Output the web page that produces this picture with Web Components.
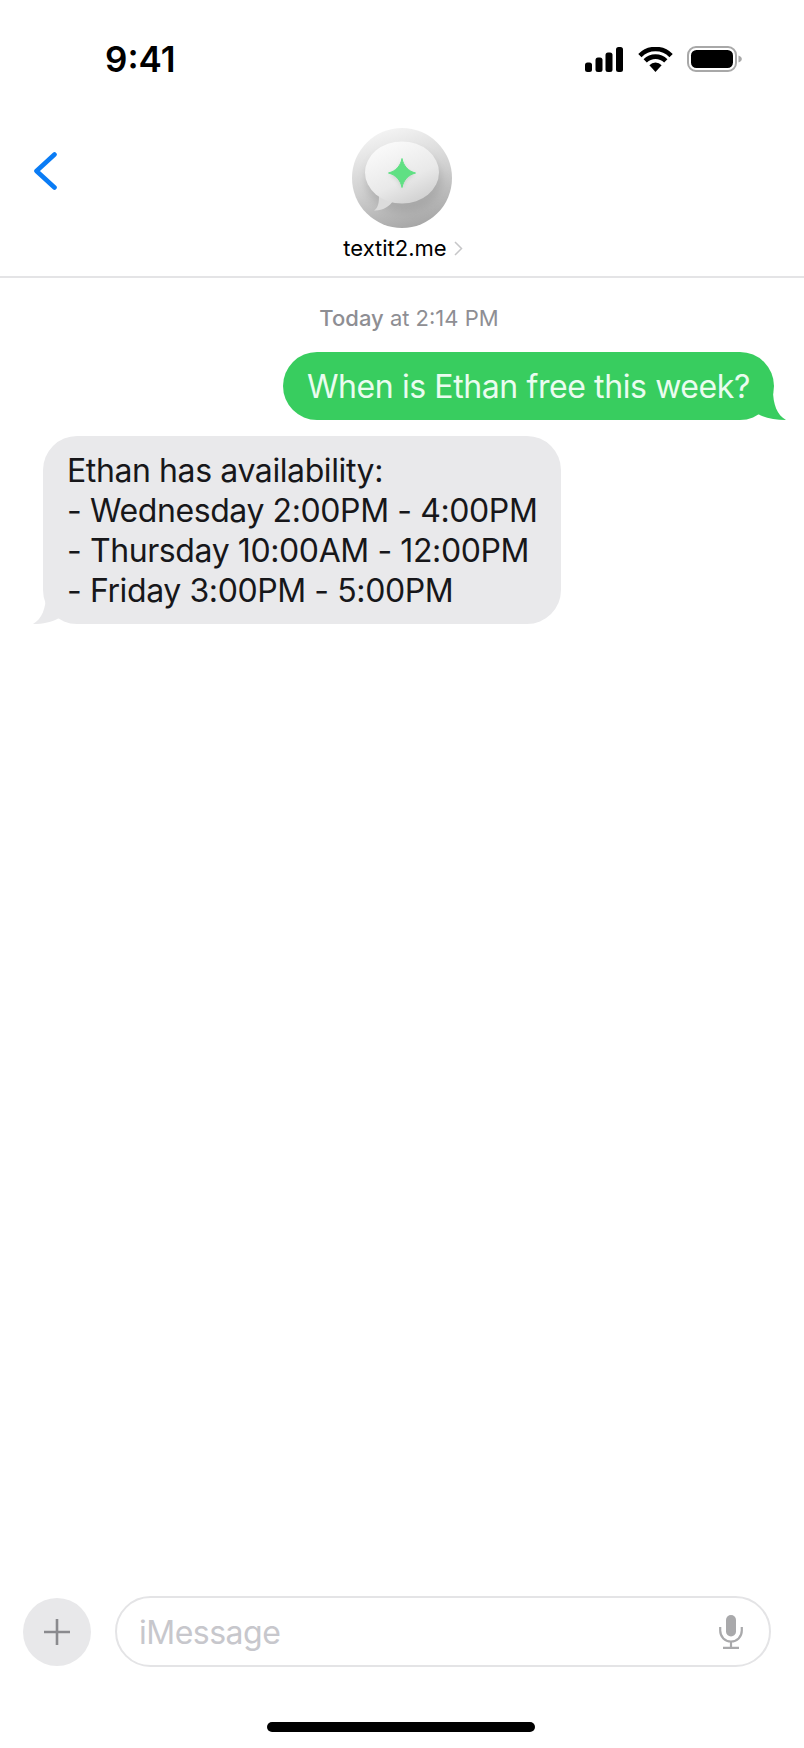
<!DOCTYPE html>
<html>
<head>
<meta charset="utf-8">
<title>Messages</title>
<style>
    html, body { margin: 0; padding: 0; background: #fff; }
    body { font-family: Inter, "Liberation Sans", sans-serif; }
    chat-app { height: 1748px; }
</style>
</head>
<body>
<chat-app>
    <status-bar slot="top" time="9:41"></status-bar>
    <nav-header slot="top" name="textit2.me"></nav-header>
    <time-stamp><b>Today</b> at 2:14 PM</time-stamp>
    <chat-bubble kind="sent">When is Ethan free this week?</chat-bubble>
    <chat-bubble kind="received">Ethan has availability:
- Wednesday 2:00PM - 4:00PM
- Thursday 10:00AM - 12:00PM
- Friday 3:00PM - 5:00PM</chat-bubble>
    <message-composer slot="bottom" placeholder="iMessage"></message-composer>
    <home-indicator slot="bottom"></home-indicator>
</chat-app>
<script>
class ChatApp extends HTMLElement {
    constructor() {
        super();
        this.attachShadow({mode: "open"}).innerHTML = `
        <style>
            :host { display: flex; flex-direction: column; width: 804px; background: #fff; overflow: hidden; }
            main { flex: 1; display: flex; flex-direction: column; }
        </style>
        <slot name="top"></slot>
        <main><slot></slot></main>
        <slot name="bottom"></slot>`;
    }
}

class StatusBar extends HTMLElement {
    constructor() {
        super();
        this.attachShadow({mode: "open"}).innerHTML = `
        <style>
            :host { display: flex; align-items: center; justify-content: space-between; height: 26px; padding: 46px 62px 0 105px; }
            .time { font: 600 35px/26px Inter, sans-serif; color: #000; }
            .icons { display: flex; align-items: center; gap: 15px; }
            svg { display: block; }
        </style>
        <span class="time">${this.getAttribute("time")}</span>
        <div class="icons">
            <svg width="38" height="25" viewBox="0 0 38 25">
                <rect x="0" y="15.5" width="7" height="9.5" rx="2.5"/>
                <rect x="10.5" y="10.5" width="7" height="14.5" rx="2.5"/>
                <rect x="20.5" y="5.5" width="7" height="19.5" rx="2.5"/>
                <rect x="31" y="0" width="7" height="25" rx="2.5"/>
            </svg>
            <svg width="35" height="25" viewBox="0 0 35 25">
                <path d="M1.9 8.6 A21.8 21.8 0 0 1 33.1 8.6 M7.2 13.9 A14.5 14.5 0 0 1 27.8 13.9" fill="none" stroke="#000" stroke-width="4.6"/>
                <path d="M17.5 25 L11.4 18.2 A8.4 8.4 0 0 1 23.6 18.2 Z"/>
            </svg>
            <svg width="55" height="26" viewBox="0 0 55 26" style="margin-left:-1px">
                <rect x="1" y="1" width="48" height="24" rx="8" fill="none" stroke="#a8a8a8" stroke-width="2"/>
                <rect x="4" y="4" width="42" height="18" rx="5.5" fill="#000"/>
                <path d="M51.5 9.5 C53.8 10.3 54.8 11.5 54.8 13 C54.8 14.5 53.8 15.7 51.5 16.5 Z" fill="#a8a8a8"/>
            </svg>
        </div>`;
    }
}

class NavHeader extends HTMLElement {
    constructor() {
        super();
        this.attachShadow({mode: "open"}).innerHTML = `
        <style>
            :host { display: grid; grid-template-columns: 1fr auto 1fr; height: 206px; box-sizing: border-box; padding-top: 56px; border-bottom: 2px solid #e4e4e6; }
            .back { padding: 24px 0 0 33px; }
            .contact { display: flex; flex-direction: column; align-items: center; }
            .name { display: flex; align-items: center; gap: 7px; margin: 7px 0 0 2px; font: 400 22px/26px Inter, sans-serif; color: #000; }
            svg { display: block; }
        </style>
        <div class="back">
            <svg width="24" height="38" viewBox="0 0 24 38">
                <path d="M21.5 2.5 L3.5 19 L21.5 35.5" fill="none" stroke="#0a7cf5" stroke-width="4.6" stroke-linecap="round" stroke-linejoin="round"/>
            </svg>
        </div>
        <div class="contact">
            <svg width="100" height="100" viewBox="0 0 100 100">
                <defs>
                    <linearGradient id="disc" x1="0.3" y1="0" x2="0.6" y2="1">
                        <stop offset="0" stop-color="#f5f5f5"/>
                        <stop offset="0.55" stop-color="#cfcfcf"/>
                        <stop offset="1" stop-color="#a6a6a6"/>
                    </linearGradient>
                    <linearGradient id="balloon" x1="0.25" y1="0" x2="0.8" y2="1">
                        <stop offset="0" stop-color="#fbfbfb"/>
                        <stop offset="0.6" stop-color="#e9e9e9"/>
                        <stop offset="1" stop-color="#cdcdcd"/>
                    </linearGradient>
                    <filter id="soft" x="-30%" y="-30%" width="160%" height="160%"><feGaussianBlur stdDeviation="4"/></filter>
                    <filter id="glow" x="-50%" y="-50%" width="200%" height="200%"><feGaussianBlur stdDeviation="2"/></filter>
                    <filter id="edge" x="-20%" y="-20%" width="140%" height="140%"><feGaussianBlur stdDeviation="0.5"/></filter>
                </defs>
                <circle cx="50" cy="50" r="50" fill="url(#disc)"/>
                <ellipse cx="52" cy="53" rx="38" ry="31" fill="#8d8d8d" opacity="0.4" filter="url(#soft)"/>
                <path d="M27 68 C27 75 26 80 22 82.5 C30 83 37 79 42 72 Z" fill="#dcdcdc"/>
                <ellipse cx="50" cy="44.5" rx="37" ry="31" fill="url(#balloon)"/>
                <path d="M50 33 C51.5 40 56 45 63 47 C56 49 51.5 53 50 61 C48.5 53 44 49 37 47 C44 45 48.5 40 50 33 Z" fill="#7a9a84" opacity="0.35" filter="url(#glow)"/>
                <path d="M50 30.5 C51.5 38 56 43 63.5 45 C56 47 51.5 52 50 59.5 C48.5 52 44 47 36.5 45 C44 43 48.5 38 50 30.5 Z" fill="#5fe083" stroke="#5fe083" stroke-width="1" stroke-linejoin="round" filter="url(#edge)"/>
            </svg>
            <div class="name">
                <span>${this.getAttribute("name")}</span>
                <svg width="9" height="15" viewBox="0 0 9 15"><path d="M1 1 L7.5 7.5 L1 14" fill="none" stroke="#c6c6c8" stroke-width="1.5"/></svg>
            </div>
        </div>`;
    }
}

class TimeStamp extends HTMLElement {
    constructor() {
        super();
        this.attachShadow({mode: "open"}).innerHTML = `
        <style>
            :host { display: block; margin-top: 28px; padding-left: 14px; text-align: center; font: 400 22px/24px Inter, sans-serif; color: #8e8e93; }
            ::slotted(b) { font-weight: 500; }
        </style>
        <slot></slot>`;
    }
}

class ChatBubble extends HTMLElement {
    constructor() {
        super();
        const sent = this.getAttribute("kind") === "sent";
        const tail = sent
            ? `<svg class="tail" width="34" height="30" viewBox="0 0 34 30"><path d="M0 0 L20 0 C20 14 24 25 33 30 C22 30 12 28 5 24 L0 20 Z" fill="#38cd5f"/></svg>`
            : `<svg class="tail" width="34" height="30" viewBox="0 0 34 30"><path d="M34 0 L14 0 C14 14 10 25 1 30 C11 30 20 28 27 24 L34 20 Z" fill="#e9e9eb"/></svg>`;
        this.attachShadow({mode: "open"}).innerHTML = `
        <style>
            :host { display: flex; justify-content: ${sent ? "flex-end" : "flex-start"}; }
            :host([kind="sent"]) { margin: 22px 30px 0 0; }
            :host([kind="received"]) { margin: 16px 0 0 43px; }
            .bubble {
                position: relative;
                box-sizing: border-box;
                padding: 15px 24px 13px;
                border-radius: 34px;
                font: 400 32px/40px Inter, sans-serif;
                letter-spacing: -0.4px;
                white-space: pre-line;
                background: ${sent ? "#38cd5f" : "#e9e9eb"};
                color: ${sent ? "#eafcef" : "#17171a"};
            }
            .tail { position: absolute; bottom: 0; ${sent ? "right: -13px" : "left: -11px"}; }
            span { position: relative; }
        </style>
        <div class="bubble">${tail}<span><slot></slot></span></div>`;
    }
}

class MessageComposer extends HTMLElement {
    constructor() {
        super();
        this.attachShadow({mode: "open"}).innerHTML = `
        <style>
            :host { display: flex; align-items: center; gap: 24px; padding: 0 33px 0 23px; }
            .plus { flex: none; width: 68px; height: 68px; border-radius: 50%; background: #e8e8ea; display: flex; align-items: center; justify-content: center; }
            .field { flex: 1; height: 71px; box-sizing: border-box; border: 2px solid #e4e4e6; border-radius: 36px; display: flex; align-items: center; justify-content: space-between; padding: 0 26px 0 22px; }
            .hint { font: 400 32px/40px Inter, sans-serif; letter-spacing: -0.5px; color: #c7c7cc; position: relative; top: 1px; }
            svg { display: block; }
        </style>
        <div class="plus">
            <svg width="26" height="26" viewBox="0 0 26 26"><path d="M13 0 V26 M0 13 H26" stroke="#8a8a8e" stroke-width="2.6"/></svg>
        </div>
        <div class="field">
            <span class="hint">${this.getAttribute("placeholder")}</span>
            <svg width="24" height="34" viewBox="0 0 24 34">
                <rect x="7" y="0" width="10" height="21.5" rx="5" fill="#a9a9ab"/>
                <path d="M1.2 12 V15.5 C1.2 22 6 26.5 12 26.5 C18 26.5 22.8 22 22.8 15.5 V12 M12 26.5 V32.5 M4 32.8 H20" fill="none" stroke="#a9a9ab" stroke-width="2.2"/>
            </svg>
        </div>`;
    }
}

class HomeIndicator extends HTMLElement {
    constructor() {
        super();
        this.attachShadow({mode: "open"}).innerHTML = `
        <style>
            :host { display: flex; justify-content: center; padding: 55px 2px 16px 0; }
            div { width: 268px; height: 10px; border-radius: 5px; background: #000; }
        </style>
        <div></div>`;
    }
}

customElements.define("chat-app", ChatApp);
customElements.define("status-bar", StatusBar);
customElements.define("nav-header", NavHeader);
customElements.define("time-stamp", TimeStamp);
customElements.define("chat-bubble", ChatBubble);
customElements.define("message-composer", MessageComposer);
customElements.define("home-indicator", HomeIndicator);
</script>
</body>
</html>
